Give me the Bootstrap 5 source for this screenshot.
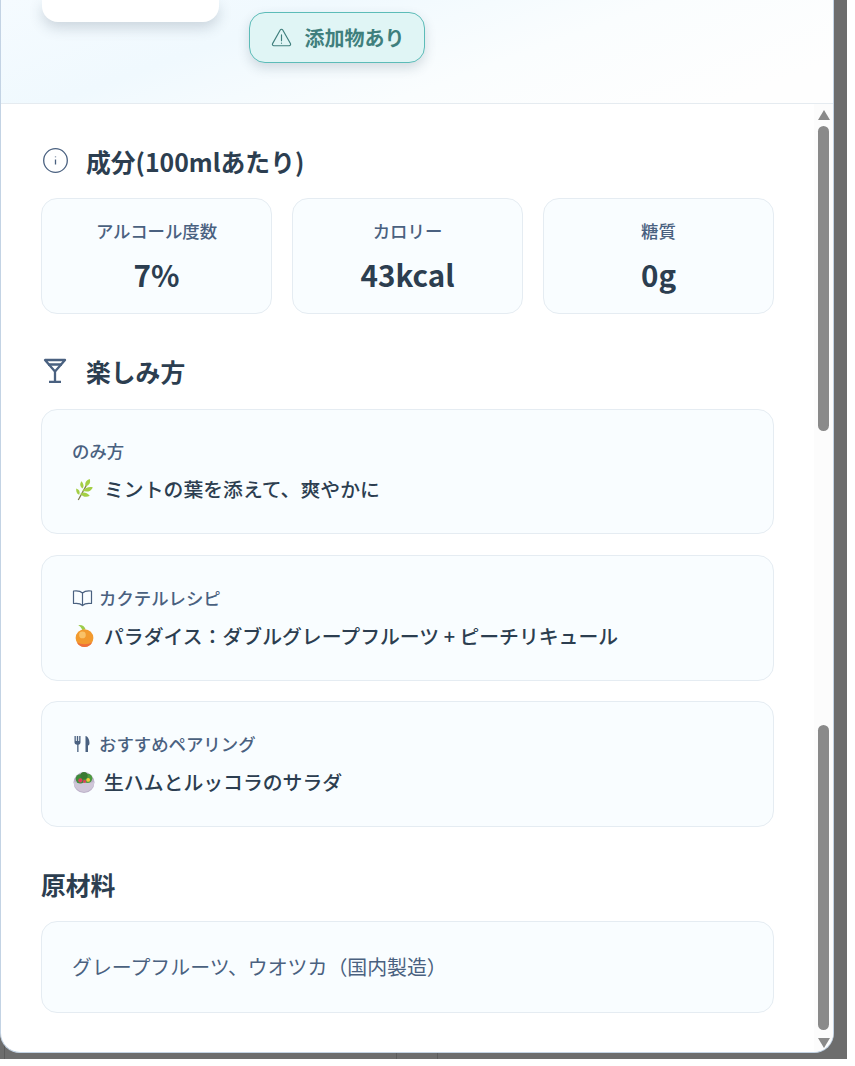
<!DOCTYPE html>
<html lang="ja">
<head>
    <meta charset="UTF-8">
    <meta name="viewport" content="width=device-width, initial-scale=1.0">
    <title>成分</title>
    <link href="https://cdn.jsdelivr.net/npm/bootstrap@5.3.0/dist/css/bootstrap.min.css" rel="stylesheet">
    <style>
        body {
            background: #fff;
            font-family: "Noto Sans CJK JP", "Noto Sans", sans-serif;
            color: #2c3e50;
        }
        .backdrop {
            width: 847px;
            height: 1059px;
            background-color: #6d6d6d;
            background-image: linear-gradient(#5c5c5c, #5c5c5c), linear-gradient(#5c5c5c, #5c5c5c), linear-gradient(#5c5c5c, #5c5c5c);
            background-size: 1px 100%;
            background-position: 4px 0, 396px 0, 437px 0;
            background-repeat: no-repeat;
            overflow: hidden;
        }
        .sheet {
            width: 834px;
            height: 1053px;
            background: #fff;
            border: 1px solid #c3d3e4;
            border-top: 0;
            border-radius: 0 0 20px 20px;
            overflow: hidden;
        }
        .hero {
            height: 104px;
            flex: none;
            background: linear-gradient(160deg, #f5fbff 0%, #f0f9fe 30%, #fafdfe 60%, #fefefe 90%);
            border-bottom: 1px solid #e5ebf0;
            padding-left: 41px;
            gap: 30px;
        }
        .photo-card {
            width: 177px;
            height: 22px;
            background: #fff;
            border-radius: 0 0 16px 16px;
            box-shadow: 0 6px 14px rgba(50, 70, 90, .2);
        }
        .additive {
            width: 176px;
            height: 51px;
            margin-top: 12px;
            padding-left: 1px;
            background: #e0f5f5;
            border: 1px solid #5cbcb8;
            border-radius: 16px;
            box-shadow: 0 5px 12px rgba(50, 70, 90, .18);
            color: #3f7f7d;
            font-size: 20px;
            font-weight: 700;
            gap: 13px;
        }
        .pane {
            padding: 39px 40px 0;
            width: 813px;
        }
        .sec-title {
            font-size: 24.8px;
            font-weight: 700;
            line-height: 36px;
            margin: 0;
            gap: 17px;
        }
        .sec-title svg { color: #4a6180; flex: none; }
        .fact-box, .note-box {
            background: #f9fdff;
            border: 1px solid #e5ecf2;
            border-radius: 16px;
        }
        .fact-box {
            width: 231px;
            height: 116px;
            text-align: center;
            padding-top: 19px;
        }
        .facts-row { margin-top: 19px; }
        .fact-name { font-size: 17.4px; line-height: 26px; color: #4a6180; font-weight: 500; }
        .fact-val { font-size: 29.6px; line-height: 46px; font-weight: 700; margin-top: 8px; }
        .heading-two { margin-top: 39px; }
        .notes-col { margin-top: 20px; gap: 20px; }
        .note-box { padding: 29px 30px 0; height: 126px; }
        .note-box.note-first { padding-top: 28px; height: 125px; margin-bottom: 1px; }
        .note-name { font-size: 17.4px; line-height: 26px; color: #4a6180; font-weight: 500; gap: 6px; }
        .note-text { font-size: 19.85px; line-height: 30px; font-weight: 500; margin-top: 10px; gap: 8px; }
        .heading-three { margin-top: 39px; }
        .material {
            padding: 0 30px;
            height: 92px;
            margin-top: 19px;
            color: #4a6180;
            font-size: 19.9px;
        }
        .rail {
            width: 19px;
            background: #fcfcfc;
            padding: 6px 4px 0;
            flex: none;
        }
        .rail-thumb { width: 11px; background: #8a8a8a; border-radius: 6px; }
        .rail-up, .rail-down { width: 0; height: 0; border-left: 6px solid transparent; border-right: 6px solid transparent; margin-left: -.5px; }
        .rail-up { border-bottom: 10px solid #8a8a8a; }
        .rail-down { border-top: 10px solid #8a8a8a; margin-top: 8px; }
        .rail-thumb-a { height: 305px; margin-top: 6px; }
        .rail-thumb-b { height: 305px; margin-top: 294px; }
    </style>
</head>
<body class="m-0">
    <div class="backdrop">
        <div class="sheet d-flex flex-column">
            <div class="hero d-flex align-items-start">
                <div class="photo-card"></div>
                <div class="additive d-flex align-items-center justify-content-center">
                    <svg width="21" height="21" viewBox="0 0 20 20" fill="none" stroke="currentColor" stroke-width="1.1" stroke-linejoin="round" stroke-linecap="round"><path d="M8.800 2.800a1.400 1.400 0 0 1 2.400 0l7.300 13a1.400 1.400 0 0 1-1.200 2.100H2.700a1.400 1.400 0 0 1-1.200-2.100z"/><path d="M10 7.500v5.500M10 15.200v.3"/></svg>
                    <span>添加物あり</span>
                </div>
            </div>
            <div class="d-flex flex-grow-1" style="min-height:0">
                <div class="pane">
                    <h2 class="sec-title d-flex align-items-center">
                        <svg width="28" height="28" viewBox="0 0 28 28" fill="none" stroke="currentColor" stroke-width="1.3"><circle cx="14.500" cy="13.500" r="11.800"/><path d="M14.500 12.500v5M14.500 9.500v.8"/></svg>
                        <span>成分(100mlあたり)</span>
                    </h2>
                    <div class="d-flex justify-content-between facts-row">
                        <div class="fact-box"><div class="fact-name">アルコール度数</div><div class="fact-val">7%</div></div>
                        <div class="fact-box"><div class="fact-name">カロリー</div><div class="fact-val">43kcal</div></div>
                        <div class="fact-box"><div class="fact-name">糖質</div><div class="fact-val">0g</div></div>
                    </div>

                    <h2 class="sec-title d-flex align-items-center heading-two">
                        <svg width="28" height="28" viewBox="0 0 28 28" fill="none" stroke="currentColor" stroke-width="2.300"><path d="M4 3h20L14 14.500z" stroke-linejoin="round"/><path d="M7 7.500h14M14 14.500v9.500M8 24.800h12"/></svg>
                        <span>楽しみ方</span>
                    </h2>
                    <div class="d-flex flex-column notes-col">
                        <div class="note-box note-first">
                            <div class="note-name d-flex align-items-center">のみ方</div>
                            <div class="note-text d-flex align-items-center">
                                <svg width="24" height="24" viewBox="0 0 23 23"><path d="M6 22 16 4" stroke="#7d7a4a" stroke-width="1.2" fill="none"/><path d="M13 9c-1-4 1-6 4-7 1 3 0 6-4 7zM10 13c3-3 7-4 10-3-2 4-6 5-10 3zM8 16c3-2 6-1 9 2-3 2-7 1-9-2zM10 11C8 9 7 7 9 4c2 2 3 5 1 7zM7 17c-3-1-3-4-3-6 3 1 4 3 3 6z" fill="#a4cf45"/></svg>
                                <span>ミントの葉を添えて、爽やかに</span>
                            </div>
                        </div>
                        <div class="note-box">
                            <div class="note-name d-flex align-items-center">
                                <svg width="21" height="18" viewBox="0 0 21 18" fill="none" stroke="#4a6180" stroke-width="1.200" stroke-linejoin="round"><path d="M10.500 4C8.500 2 5 1.500 1.500 2v12.500c3.500-.5 7 0 9 2 2-2 5.500-2.500 9-2V2c-3.500-.5-7 0-9 2zM10.500 4v12.500"/></svg>
                                <span>カクテルレシピ</span>
                            </div>
                            <div class="note-text d-flex align-items-center">
                                <svg width="24" height="24" viewBox="0 0 23 23"><path d="M10 6C9 3.500 7.500 2 6 1c3.500-.5 6 1 7 4z" fill="#9ccc4a"/><circle cx="12" cy="13.500" r="8.500" fill="#f29a2e"/><path d="M4.500 17.500a8.500 8.500 0 0 0 15 0c-4 2.500-11 2.500-15 0z" fill="#ee6f3a"/><circle cx="10" cy="10.500" r="3.200" fill="#f9c268"/></svg>
                                <span>パラダイス：ダブルグレープフルーツ + ピーチリキュール</span>
                            </div>
                        </div>
                        <div class="note-box">
                            <div class="note-name d-flex align-items-center">
                                <svg width="21" height="18" viewBox="0 0 21 18" fill="#4a6180"><path d="M2.500 1h1.300v5h1V1h1.400v5h1V1h1.300v6.500c0 1.200-1 2-2 2.300V17H5.200V9.800c-1.700-.3-2.700-1.100-2.700-2.300zM13.500 1c2.500.5 4 3.500 4 7 0 1.500-.5 2.500-1.500 2.500V17h-2.500z"/></svg>
                                <span>おすすめペアリング</span>
                            </div>
                            <div class="note-text d-flex align-items-center">
                                <svg width="24" height="24" viewBox="0 0 23 23"><circle cx="11.500" cy="12" r="10" fill="#bdb2ca"/><path d="M1.500 11a10 10 0 0 0 20 0c-3 2-17 2-20 0z" fill="#cfc6d8"/><circle cx="8" cy="8.500" r="4.500" fill="#3f8c3a"/><circle cx="15" cy="8" r="4.500" fill="#4d9a3f"/><circle cx="11.500" cy="5.500" r="3.500" fill="#3a7a32"/><circle cx="8" cy="10" r="2" fill="#e0405a"/><circle cx="15.500" cy="9.500" r="1.800" fill="#f2c83a"/><circle cx="12" cy="11" r="1.400" fill="#e0405a"/></svg>
                                <span>生ハムとルッコラのサラダ</span>
                            </div>
                        </div>
                    </div>

                    <h2 class="sec-title heading-three">原材料</h2>
                    <div class="note-box material d-flex align-items-center">グレープフルーツ、ウオツカ（国内製造）</div>
                </div>
                <div class="rail d-flex flex-column">
                    <div class="rail-up"></div>
                    <div class="rail-thumb rail-thumb-a"></div>
                    <div class="rail-thumb rail-thumb-b"></div>
                    <div class="rail-down"></div>
                </div>
            </div>
        </div>
    </div>
    <script src="https://cdn.jsdelivr.net/npm/bootstrap@5.3.0/dist/js/bootstrap.bundle.min.js"></script>
</body>
</html>
